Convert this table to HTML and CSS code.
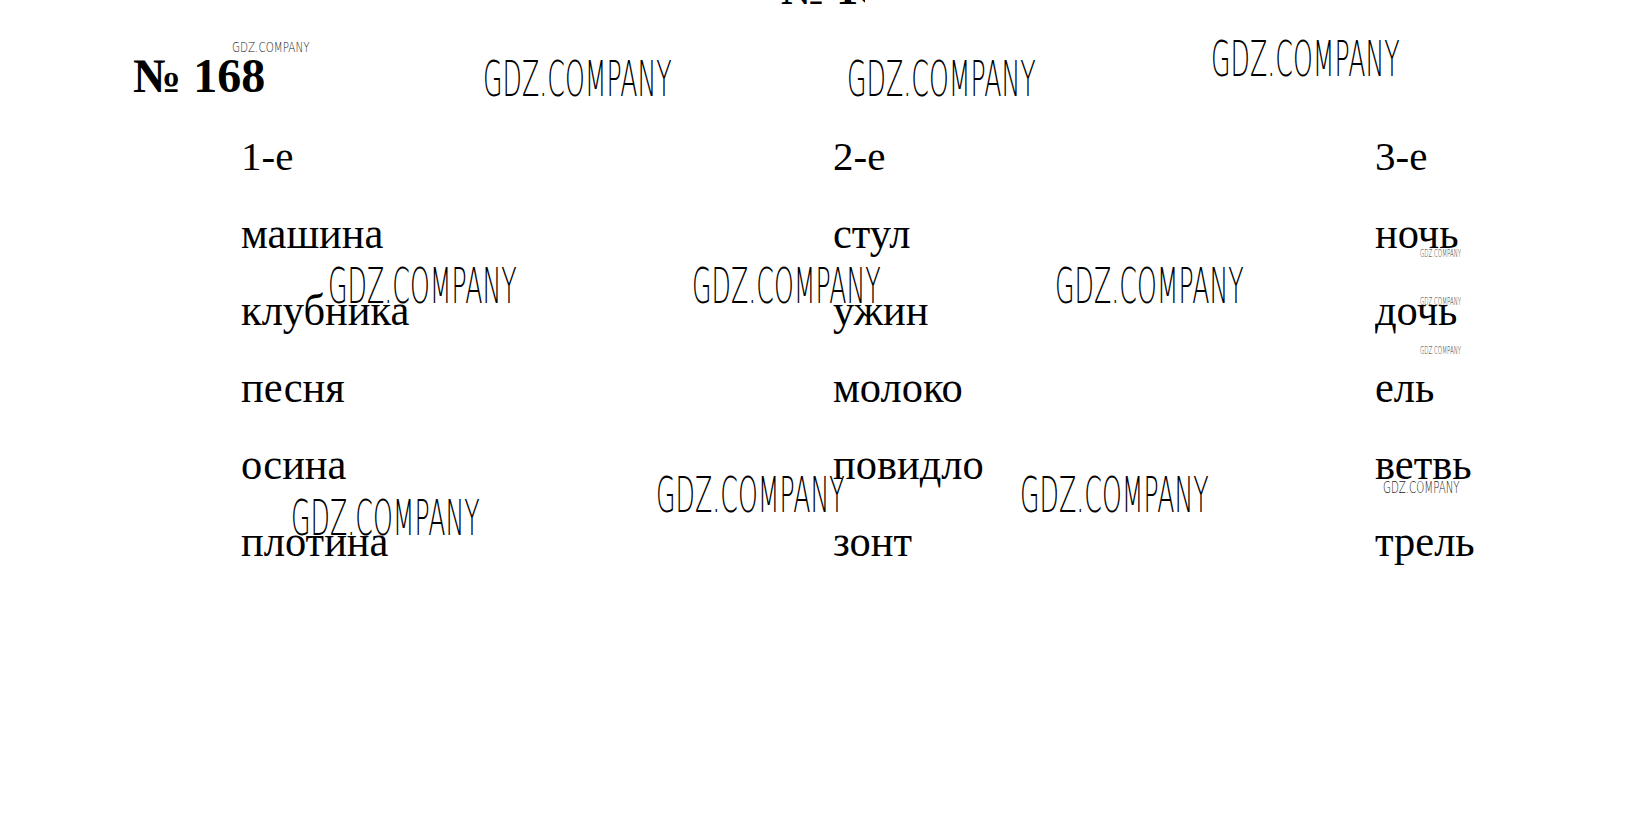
FILE: index.html
```html
<!DOCTYPE html>
<html lang="ru">
<head>
<meta charset="utf-8">
<title>№ 168</title>
<link rel="stylesheet" href="styles.css">
</head>
<body>
<div class="page">
  <div class="cut"><span class="cut-text">№ 167</span></div>
  <h1 class="num">№ 168</h1>
  <div class="table">
    <div class="col">
      <div class="cell head"><span class="w">1-е</span></div>
      <div class="cell"><span class="w">машина</span></div>
      <div class="cell"><span class="w">клубника</span></div>
      <div class="cell"><span class="w">песня</span></div>
      <div class="cell"><span class="w">осина</span></div>
      <div class="cell"><span class="w">плотина</span></div>
    </div>
    <div class="col">
      <div class="cell head"><span class="w">2-е</span></div>
      <div class="cell"><span class="w">стул</span></div>
      <div class="cell"><span class="w">ужин</span></div>
      <div class="cell"><span class="w">молоко</span></div>
      <div class="cell"><span class="w">повидло</span></div>
      <div class="cell"><span class="w">зонт</span></div>
    </div>
    <div class="col">
      <div class="cell head"><span class="w">3-е</span></div>
      <div class="cell"><span class="w">ночь</span></div>
      <div class="cell"><span class="w">дочь</span></div>
      <div class="cell"><span class="w">ель</span></div>
      <div class="cell"><span class="w">ветвь</span></div>
      <div class="cell"><span class="w">трель</span></div>
    </div>
  </div>

  <span class="wm wm-s1">GDZ.COMPANY</span>
  <span class="wm wm-l wm2">GDZ.COMPANY</span>
  <span class="wm wm-l wm3">GDZ.COMPANY</span>
  <span class="wm wm-l wm4">GDZ.COMPANY</span>
  <span class="wm wm-l wm5">GDZ.COMPANY</span>
  <span class="wm wm-l wm6">GDZ.COMPANY</span>
  <span class="wm wm-l wm7">GDZ.COMPANY</span>
  <span class="wm wm-l wm8">GDZ.COMPANY</span>
  <span class="wm wm-l wm9">GDZ.COMPANY</span>
  <span class="wm wm-l wm10">GDZ.COMPANY</span>
  <span class="wm wm-xs wm11">GDZ.COMPANY</span>
  <span class="wm wm-xs wm12">GDZ.COMPANY</span>
  <span class="wm wm-xs wm13">GDZ.COMPANY</span>
  <span class="wm wm-m wm14">GDZ.COMPANY</span>
</div>
</body>
</html>
```

FILE: styles.css
```css
html, body {
  margin: 0;
  padding: 0;
  background: #ffffff;
}

.page {
  position: relative;
  width: 1643px;
  height: 814px;
  overflow: hidden;
  color: #000;
  font-family: "Liberation Serif", "Times New Roman", serif;
}

.num {
  margin: 0;
  padding: 52px 0 0 133px;
  font-size: 48px;
  line-height: 48px;
  font-weight: 700;
  height: 48px;
}

.table {
  display: grid;
  grid-template-columns: 592px 542px auto;
  padding-left: 241px;
  margin-top: 18px;
}

.col {
  display: flex;
  flex-direction: column;
}

.cell {
  font-size: 44px;
  line-height: 77px;
  height: 77px;
  white-space: nowrap;
}

.cell .w {
  display: inline-block;
  transform: scaleX(0.965);
  transform-origin: 0 50%;
}

.cell.head {
  font-size: 41px;
}

.cell.head .w {
  transform: scaleX(1);
}

.cut {
  position: absolute;
  left: 781px;
  top: 0;
  width: 84px;
  height: 6px;
  overflow: hidden;
}

.cut-text {
  display: block;
  margin-top: -32px;
  font-size: 44px;
  line-height: 44px;
  font-weight: 700;
  white-space: nowrap;
}

/* watermarks */
.wm {
  position: absolute;
  font-family: "DejaVu Sans", sans-serif;
  font-weight: 200;
  line-height: 1;
  white-space: nowrap;
  color: #000;
  transform-origin: 0 0;
}

.wm-l {
  font-size: 49px;
  transform: scaleX(0.515);
}

.wm-s1 {
  font-size: 14px;
  left: 232px;
  top: 40px;
  transform: scaleX(0.74);
  color: #222;
}

.wm-xs {
  font-size: 11px;
  transform: scaleX(0.5);
  color: #333;
  left: 1420px;
}

.wm-m {
  font-size: 16px;
  transform: scaleX(0.64);
  color: #222;
}

.wm2 { left: 483px; top: 55px; }
.wm3 { left: 847px; top: 55px; }
.wm4 { left: 1211px; top: 35px; }
.wm5 { left: 328px; top: 262px; }
.wm6 { left: 692px; top: 262px; }
.wm7 { left: 1055px; top: 262px; }
.wm8 { left: 656px; top: 471px; }
.wm9 { left: 1020px; top: 471px; }
.wm10 { left: 291px; top: 494px; }
.wm11 { top: 248px; }
.wm12 { top: 296px; }
.wm13 { top: 345px; }
.wm14 { left: 1383px; top: 480px; }
```
